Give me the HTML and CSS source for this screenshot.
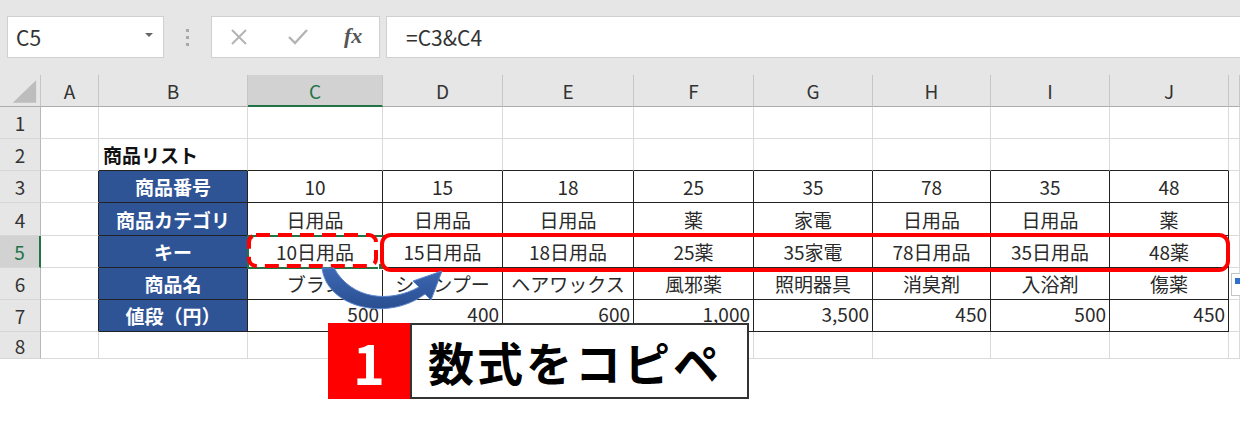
FILE: index.html
```html
<!DOCTYPE html>
<html lang="ja">
<head>
<meta charset="utf-8" />
<title>商品リスト</title>
<link rel="stylesheet" href="styles.css">
</head>
<body>
<div class="page">
	<div class="toolbar">
		<div class="name-box">
			<span>C5</span>
			<span class="drop"></span>
		</div>
		<div class="grip"><i></i><i></i><i></i></div>
		<div class="fx-buttons">
			<svg class="btn-x" width="20" height="20" viewBox="0 0 20 20"><path d="M3 3L17 17M17 3L3 17" stroke="#b4b4b4" stroke-width="2" fill="none"/></svg>
			<svg class="btn-ok" width="22" height="20" viewBox="0 0 22 20"><path d="M2 10L8 16L20 3" stroke="#b4b4b4" stroke-width="2.4" fill="none"/></svg>
			<span class="fx">fx</span>
		</div>
		<div class="formula">=C3&amp;C4</div>
	</div>

	<div class="sheet">
		<!-- column headers -->
		<div class="hd corner"><svg width="41" height="32" viewBox="0 0 41 32"><polygon points="13,28 37,28 37,5" fill="#bdbdbd"/></svg></div>
		<div class="hd">A</div>
		<div class="hd">B</div>
		<div class="hd sel">C</div>
		<div class="hd">D</div>
		<div class="hd">E</div>
		<div class="hd">F</div>
		<div class="hd">G</div>
		<div class="hd">H</div>
		<div class="hd">I</div>
		<div class="hd">J</div>
		<div class="hd"></div>

		<!-- row 1 -->
		<div class="rh">1</div>
		<div class="c"></div><div class="c"></div><div class="c"></div><div class="c"></div><div class="c"></div>
		<div class="c"></div><div class="c"></div><div class="c"></div><div class="c"></div><div class="c"></div><div class="c"></div>

		<!-- row 2 -->
		<div class="rh">2</div>
		<div class="c"></div>
		<div class="c bt title">商品リスト</div>
		<div class="c bt"></div><div class="c bt"></div><div class="c bt"></div><div class="c bt"></div>
		<div class="c bt"></div><div class="c bt"></div><div class="c bt"></div><div class="c bt"></div>
		<div class="c"></div>

		<!-- row 3 -->
		<div class="rh">3</div>
		<div class="c br"></div>
		<div class="k">商品番号</div>
		<div class="t">10</div><div class="t">15</div><div class="t">18</div><div class="t">25</div>
		<div class="t">35</div><div class="t">78</div><div class="t">35</div><div class="t">48</div>
		<div class="c"></div>

		<!-- row 4 -->
		<div class="rh">4</div>
		<div class="c br"></div>
		<div class="k">商品カテゴリ</div>
		<div class="t">日用品</div><div class="t">日用品</div><div class="t">日用品</div><div class="t">薬</div>
		<div class="t">家電</div><div class="t">日用品</div><div class="t">日用品</div><div class="t">薬</div>
		<div class="c"></div>

		<!-- row 5 -->
		<div class="rh sel">5</div>
		<div class="c br"></div>
		<div class="k">キー</div>
		<div class="t active">10日用品</div><div class="t">15日用品</div><div class="t">18日用品</div><div class="t">25薬</div>
		<div class="t">35家電</div><div class="t">78日用品</div><div class="t">35日用品</div><div class="t">48薬</div>
		<div class="c"></div>

		<!-- row 6 -->
		<div class="rh">6</div>
		<div class="c br"></div>
		<div class="k">商品名</div>
		<div class="t">ブラシ</div><div class="t">シャンプー</div><div class="t">ヘアワックス</div><div class="t">風邪薬</div>
		<div class="t">照明器具</div><div class="t">消臭剤</div><div class="t">入浴剤</div><div class="t">傷薬</div>
		<div class="c"></div>

		<!-- row 7 -->
		<div class="rh">7</div>
		<div class="c br"></div>
		<div class="k">値段（円）</div>
		<div class="t num">500</div><div class="t num">400</div><div class="t num">600</div><div class="t num">1,000</div>
		<div class="t num">3,500</div><div class="t num">450</div><div class="t num">500</div><div class="t num">450</div>
		<div class="c"></div>

		<!-- row 8 -->
		<div class="rh">8</div>
		<div class="c"></div><div class="c"></div><div class="c"></div><div class="c"></div><div class="c"></div>
		<div class="c"></div><div class="c"></div><div class="c"></div><div class="c"></div><div class="c"></div><div class="c"></div>
	</div>

	<!-- annotations drawn over the sheet -->
	<svg class="marks" width="1240" height="421" viewBox="0 0 1240 421">
		<defs>
			<linearGradient id="arrowFill" x1="0" y1="0" x2="0" y2="1">
				<stop offset="0" stop-color="#3d68b4"/>
				<stop offset="1" stop-color="#2a4f91"/>
			</linearGradient>
		</defs>
		<rect x="382" y="235" width="846" height="35" rx="9" fill="none" stroke="#ff0000" stroke-width="4"/>
		<rect x="249" y="235" width="127" height="31" rx="7" fill="none" stroke="#ff0000" stroke-width="4" stroke-dasharray="14 8"/>
		<path d="M322,268 C327,308 388,322 425,294 L431,300 L442,271 L413,281 L419,287 C390,303 352,300 334,268 Z" fill="url(#arrowFill)" stroke="#5b85cc" stroke-width="1"/>
	</svg>

	<div class="paste-tag"><span></span></div>

	<div class="callout">
		<div class="callout-num">1</div>
		<div class="callout-text">数式をコピペ</div>
	</div>
</div>
</body>
</html>
```

FILE: styles.css
```css
body{
	margin: 0;
	background: #fff;
	font-family: "Noto Sans CJK JP", "Liberation Sans", sans-serif;
	color: #222;
}
.page{
	position: relative;
	width: 1240px;
	height: 421px;
	overflow: hidden;
}

/* formula bar */
.toolbar{
	height: 75px;
	box-sizing: border-box;
	padding-top: 16px;
	background: #e6e6e6;
	display: flex;
	align-items: flex-start;
}
.name-box{
	margin-left: 7px;
	width: 157px;
	height: 42px;
	box-sizing: border-box;
	background: #fff;
	border: 1px solid #d0d0d0;
	display: flex;
	align-items: center;
	justify-content: space-between;
	padding: 0 10px 0 8px;
	font-size: 21px;
	color: #333;
}
.name-box .drop{
	width: 0;
	height: 0;
	border-left: 4px solid transparent;
	border-right: 4px solid transparent;
	border-top: 4px solid #666;
	margin-bottom: 4px;
}
.grip{
	width: 47px;
	height: 42px;
	display: flex;
	flex-direction: column;
	align-items: center;
	justify-content: center;
	gap: 4px;
}
.grip i{
	width: 3px;
	height: 3px;
	background: #a8a8a8;
}
.fx-buttons{
	width: 169px;
	height: 42px;
	box-sizing: border-box;
	background: #fff;
	border: 1px solid #d0d0d0;
	display: flex;
	align-items: center;
	padding-left: 17px;
}
.btn-x{
	margin-right: 38px;
}
.btn-ok{
	margin-right: 35px;
}
.fx{
	font-family: "Liberation Serif", serif;
	font-style: italic;
	font-weight: bold;
	font-size: 22px;
	color: #555;
	margin-bottom: 3px;
}
.formula{
	flex: 1;
	margin-left: 6px;
	height: 42px;
	box-sizing: border-box;
	background: #fff;
	border: 1px solid #d0d0d0;
	border-right: none;
	display: flex;
	align-items: center;
	padding-left: 19px;
	font-size: 21px;
	color: #333;
}

/* sheet */
.sheet{
	display: grid;
	grid-template-columns: 41px 58px 149px 135px 120px 131px 120px 119px 118px 119px 119px 1fr;
	grid-template-rows: 32px 32px 32px 32px 33px 32px 32px 32px 27px;
	font-size: 19px;
}
.sheet > div{
	box-sizing: border-box;
	display: flex;
	align-items: center;
	justify-content: center;
	white-space: nowrap;
}
.hd{
	background: #e6e6e6;
	border-right: 1px solid #c6c6c6;
	border-bottom: 1px solid #acacac;
	color: #333;
}
.hd.corner{
	align-items: stretch;
}
.hd.sel{
	background: #d2d2d2;
	color: #217346;
	border-bottom: 2px solid #217346;
}
.rh{
	background: #e6e6e6;
	border-right: 1px solid #b8b8b8;
	border-bottom: 1px solid #d6d6d6;
	color: #333;
}
.sheet > .rh:last-of-type{
	border-bottom: none;
	padding-top: 3px;
}
.rh.sel{
	background: #d2d2d2;
	color: #217346;
	border-right: 2px solid #217346;
}
.c{
	border-right: 1px solid #dadada;
	border-bottom: 1px solid #dadada;
}
.c.bt{
	border-bottom-color: #222;
}
.c.br{
	border-right-color: #222;
}
.c.title{
	justify-content: flex-start;
	padding-left: 4px;
	font-weight: bold;
	color: #111;
}
.k{
	background: #2f5496;
	color: #fff;
	font-weight: bold;
	border-right: 1px solid #222;
	border-bottom: 1px solid #222;
}
.t{
	border-right: 1px solid #222;
	border-bottom: 1px solid #222;
	color: #2a2a2a;
}
.t.num{
	justify-content: flex-end;
	line-height: 1;
	padding: 0 3px 5px 0;
}
.t.active{
	position: relative;
	outline: 2px solid #217346;
	outline-offset: -1px;
}
.t.active::after{
	content: "";
	position: absolute;
	right: -3px;
	bottom: -3px;
	width: 5px;
	height: 5px;
	background: #217346;
	border: 1px solid #fff;
}

/* overlays */
.marks{
	position: absolute;
	left: 0;
	top: 0;
	pointer-events: none;
}
.paste-tag{
	position: absolute;
	left: 1231px;
	top: 273px;
	width: 16px;
	height: 23px;
	box-sizing: border-box;
	background: #fff;
	border: 1px solid #c4c4c4;
}
.paste-tag span{
	display: block;
	margin: 4px 0 0 3px;
	width: 6px;
	height: 6px;
	background: #2f6fd0;
}
.callout{
	position: absolute;
	left: 328px;
	top: 323px;
	display: flex;
	height: 76px;
}
.callout-num{
	width: 82px;
	background: #ff0000;
	color: #fff;
	font-size: 54px;
	font-weight: bold;
	display: flex;
	align-items: center;
	justify-content: center;
}
.callout-text{
	width: 339px;
	box-sizing: border-box;
	background: #fff;
	border: 2px solid #333;
	display: flex;
	align-items: center;
	padding-left: 16px;
	font-size: 46px;
	font-weight: bold;
	letter-spacing: 3px;
	color: #000;
}
```
